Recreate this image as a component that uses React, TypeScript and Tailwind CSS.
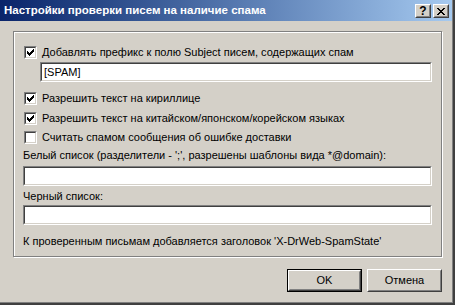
import React from "react";

function Sunken({ className, children }: { className: string; children?: React.ReactNode }) {
  return (
    <div className={`border border-t-[#808080] border-l-[#808080] border-r-white border-b-white ${className}`}>
      <div className="h-full w-full border border-t-[#404040] border-l-[#404040] border-r-[#d4d0c8] border-b-[#d4d0c8] bg-white">
        {children}
      </div>
    </div>
  );
}

const CHECK = [
  [6, 0],
  [5, 1], [6, 1],
  [0, 2], [4, 2], [5, 2], [6, 2],
  [0, 3], [1, 3], [3, 3], [4, 3], [5, 3],
  [0, 4], [1, 4], [2, 4], [3, 4], [4, 4],
  [1, 5], [2, 5], [3, 5],
  [2, 6],
];

function CheckBox({ checked }: { checked: boolean }) {
  return (
    <Sunken className="h-[13px] w-[13px] shrink-0">
      {checked && (
        <svg width="9" height="9" viewBox="0 0 9 9" shapeRendering="crispEdges" className="block">
          <path d={CHECK.map(([x, y]) => `M${x + 1} ${y + 1}h1v1h-1z`).join("")} fill="#000" />
        </svg>
      )}
    </Sunken>
  );
}

function Row({ checked, label, className }: { checked: boolean; label: string; className: string }) {
  return (
    <div className={`flex h-[13px] items-center gap-[5px] pl-[1px] ${className}`}>
      <CheckBox checked={checked} />
      <span className="leading-[13px]">{label}</span>
    </div>
  );
}

export default function App() {
  return (
    <div className="h-[305px] w-[455px] bg-[#404040] pb-[2px] pr-[2px] font-['Liberation_Sans',Arial,sans-serif] text-[11px] text-black">
      <div className="h-full w-full bg-[#808080] pb-[1px] pr-[1px]">
        <div className="flex h-full w-full flex-col bg-[#d4d0c8]">
          {/* title bar */}
          <div className="flex h-[21px] items-start bg-gradient-to-r from-[#0a246a] to-[#a6caf0]">
            <span className="ml-[4px] mt-[3px] text-[11.5px] font-bold leading-[14px] text-white">
              Настройки проверки писем на наличие спама
            </span>
            <div className="ml-auto mr-[3px] mt-[4px] flex gap-[2px]">
              <div className="h-[14px] w-[16px] border border-t-white border-l-white border-r-[#404040] border-b-[#404040] bg-[#d4d0c8]">
                <div className="flex h-full w-full items-center justify-center border border-transparent border-r-[#808080] border-b-[#808080] text-[12px] font-bold leading-none">
                  ?
                </div>
              </div>
              <div className="h-[14px] w-[16px] border border-t-white border-l-white border-r-[#404040] border-b-[#404040] bg-[#d4d0c8]">
                <div className="flex h-full w-full items-center justify-center border border-transparent border-r-[#808080] border-b-[#808080]">
                  <svg width="8" height="7" viewBox="0 0 8 7" shapeRendering="crispEdges" className="block">
                    <path
                      d="M0 0h2v1h-2zM6 0h2v1h-2zM1 1h2v1h-2zM5 1h2v1h-2zM2 2h4v1h-4zM3 3h2v1h-2zM2 4h4v1h-4zM1 5h2v1h-2zM5 5h2v1h-2zM0 6h2v1h-2zM6 6h2v1h-2z"
                      fill="#000"
                    />
                  </svg>
                </div>
              </div>
            </div>
          </div>

          {/* body */}
          <div className="pl-[13px] pt-[10px]">
            <div className="h-[226px] w-[429px] border border-[#808080] pl-[9px] pt-[14px] shadow-[inset_1px_1px_0_#fff,1px_1px_0_#fff]">
              <Row checked label="Добавлять префикс к полю Subject писем, содержащих спам" className="" />
              <Sunken className="ml-[17px] mt-[3px] h-[20px] w-[392px]">
                <div className="pl-[2px] leading-[16px]">[SPAM]</div>
              </Sunken>
              <Row checked label="Разрешить текст на кириллице" className="mt-[10px]" />
              <Row checked label="Разрешить текст на китайском/японском/корейском языках" className="mt-[7px]" />
              <Row checked={false} label="Считать спамом сообщения об ошибке доставки" className="mt-[6px]" />
              <div className="mt-[5px] leading-[13px]">
                Белый список (разделители - ';', разрешены шаблоны вида *@domain):
              </div>
              <Sunken className="mt-[4px] h-[20px] w-[409px]" />
              <div className="mt-[4px] leading-[13px]">Черный список:</div>
              <Sunken className="mt-[2px] h-[20px] w-[409px]" />
              <div className="mt-[10px] leading-[13px]">
                К проверенным письмам добавляется заголовок 'X-DrWeb-SpamState'
              </div>
            </div>
            <div className="mr-[10px] mt-[12px] flex justify-end gap-[5px]">
              <div className="h-[23px] w-[75px] border border-black">
                <div className="h-full w-full border border-t-white border-l-white border-r-[#404040] border-b-[#404040] bg-[#d4d0c8]">
                  <div className="flex h-full w-full items-center justify-center border border-transparent border-r-[#808080] border-b-[#808080] leading-none">
                    OK
                  </div>
                </div>
              </div>
              <div className="h-[23px] w-[75px] border border-t-white border-l-white border-r-[#404040] border-b-[#404040] bg-[#d4d0c8]">
                <div className="flex h-full w-full items-center justify-center border border-transparent border-r-[#808080] border-b-[#808080] leading-none">
                  Отмена
                </div>
              </div>
            </div>
          </div>
        </div>
      </div>
    </div>
  );
}
